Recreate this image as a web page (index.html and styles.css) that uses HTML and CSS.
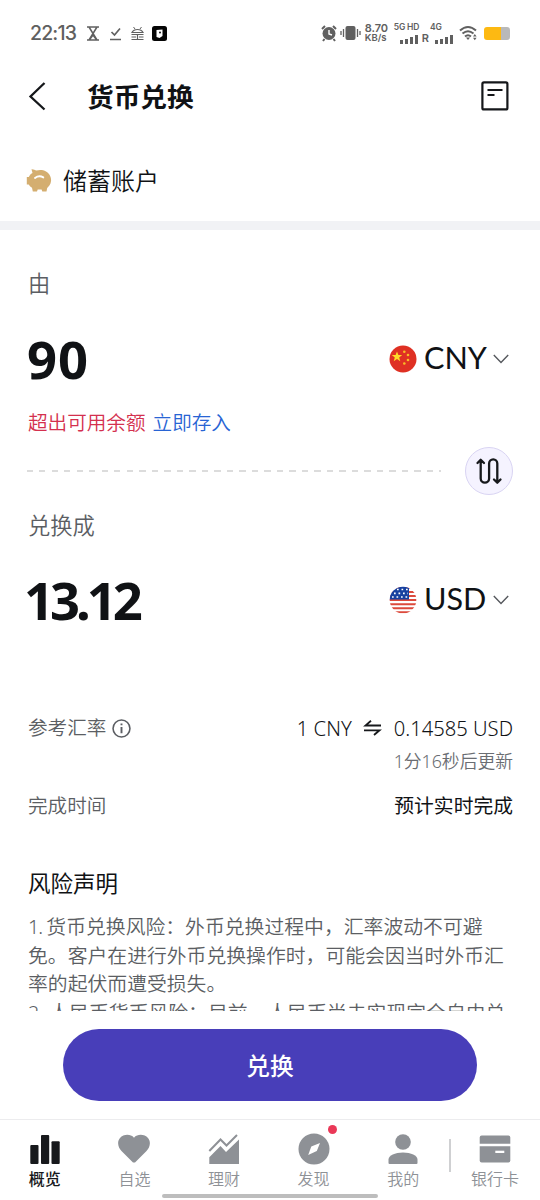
FILE: index.html
```html
<!DOCTYPE html>
<html lang="zh-CN">
<head>
<meta charset="utf-8">
<title>货币兑换</title>
<link rel="stylesheet" href="styles.css">
</head>
<body>
<div class="screen">
  <div class="status">
    <span class="clock">22:13</span>
    <svg class="status-left" width="84" height="20" viewBox="0 0 84 20" fill="none" stroke="#606060" stroke-width="1.5">
      <path d="M2 4H14M2 17H14M4 4L12 17M12 4L4 17M5 16L8 12L11 16"/>
      <path d="M25 16.5H36M26.500 9L29.500 12L35 5.500" stroke-width="1.700"/>
      <path d="M47 9.500A6 5 0 0 1 58 9.500ZM46.500 11.500H58.500M46.500 14H51M54 14H58.500M46.500 16.500H58.500M52.500 12V17" stroke-width="1.200"/>
      <path d="M48.500 4L50 6M56.500 4L55 6" stroke-width="1"/>
      <rect x="67" y="3" width="15" height="15" rx="2.500" fill="#050505" stroke="none"/>
      <path d="M71.500 7L77.500 6.500V13L74.500 15L71.500 14Z" fill="#fff" stroke="none"/>
      <circle cx="75" cy="9.500" r="1" fill="#111" stroke="none"/>
    </svg>
    <div class="status-right">
      <svg class="alarm" width="40" height="18" viewBox="0 0 40 18">
        <circle cx="8" cy="9.500" r="6.500" fill="#606060"/>
        <path d="M1 5L4 2M12 2L15 5M3.500 15L2 17M12.500 15L14 17" stroke="#606060" stroke-width="2"/>
        <path d="M8 6V10L11 11" stroke="#fff" stroke-width="1.400" fill="none"/>
        <rect x="24.500" y="2" width="10" height="14" rx="2" fill="#606060"/>
        <path d="M22.500 5V13M20 7V11M36.500 5V13M39 7V11" stroke="#606060" stroke-width="1.300"/>
      </svg>
      <span class="speed"><b>8.70</b><b>KB/s</b></span>
      <span class="sim"><b>5G HD</b><svg width="18" height="9" viewBox="0 0 18 9" fill="#606060"><path d="M0 5h3v4H0zM5 4h3v5H5zM10 2h3v7h-3zM15 0h3v9h-3z"/></svg></span>
      <span class="roam">R</span>
      <span class="sim sim2"><b>4G</b><svg width="18" height="9" viewBox="0 0 18 9" fill="#606060"><path d="M0 5h3v4H0zM5 4h3v5H5zM10 2h3v7h-3zM15 0h3v9h-3z"/></svg></span>
      <svg class="wifi" width="19" height="16" viewBox="0 0 19 16" fill="none" stroke="#606060" stroke-width="2">
        <path d="M1 5.500Q9 -1.500 17 5.500M3.500 8.500Q9 4 14.500 8.500M6 11.500Q9 9 12 11.500"/>
        <path d="M7 12.500H11L9 15Z" fill="#606060" stroke="none"/>
        <path d="M14 11.500L15.800 9L17.600 11.500ZM14 12.800H17.600L15.800 15.300Z" fill="#606060" stroke="none"/>
      </svg>
      <span class="battery"></span>
    </div>
  </div>

  <header class="header">
    <svg width="20" height="32" viewBox="0 0 20 32" fill="none" stroke="#15171a" stroke-width="2.300"><path d="M17.500 3L3.500 16.500L17.500 29.500"/></svg>
    <h1>货币兑换</h1>
    <svg class="doc" width="28" height="30" viewBox="0 0 28 30" fill="none" stroke="#15171a" stroke-width="2.200"><rect x="1.400" y="1.400" width="25" height="27" rx="1.500"/><path d="M6.500 9H21.500M6.500 14H13.500"/></svg>
  </header>

  <div class="account">
    <svg width="26" height="24" viewBox="0 0 26 24"><path d="M5.500 .2C7.500 0 9 1.300 10.500 1.600C13 .9 17 .8 20 2.400C23.500 4.200 25.300 8 25.100 11.500C24.900 15.500 22.500 17.500 21.200 19L20.500 22.500H16.300L15.600 20.500H11.700L11 22.500H6.800L6 18.700C4.500 17.800 3.300 16.500 2.700 15.400H.8V8H2.800C3.500 6.500 4.500 5 6.500 4Z" fill="#d4ae70"/><path d="M9 9Q13 6 17.300 8.400" fill="none" stroke="#fff" stroke-width="1.900" stroke-linecap="round"/></svg>
    <span>储蓄账户</span>
  </div>

  <main class="content">
    <div class="label from-label">由</div>
    <div class="money">
      <strong>90</strong>
      <span class="currency">
        <svg width="28" height="28" viewBox="0 0 28 28"><circle cx="14" cy="14" r="13.500" fill="#df3023"/><path fill="#ffda28" d="M8 6.500L9.400 10.100H13.200L10.200 12.500L11.300 16.200L8 14L4.700 16.200L5.800 12.500L2.800 10.100H6.600Z"/><g fill="#f8be25"><circle cx="15.300" cy="6.700" r="1.300"/><circle cx="19" cy="10" r="1.300"/><circle cx="19" cy="15" r="1.300"/><circle cx="15.300" cy="18.500" r="1.300"/></g></svg>
        <b>CNY</b>
        <svg class="chevron" width="16" height="10" viewBox="0 0 16 10" fill="none" stroke="#55585d" stroke-width="1.400"><path d="M.8 1L8 8.500L15.200 1"/></svg>
      </span>
    </div>
    <div class="warning"><span>超出可用余额</span><a>立即存入</a></div>
    <div class="swap-row">
      <i class="dashes"></i>
      <span class="swap"><svg width="28" height="28" viewBox="0 0 28 28" fill="none" stroke="#17191c" stroke-width="2.300" stroke-linecap="round" stroke-linejoin="round"><path d="M2.500 6L5.700 2.800L9 6M5.700 3V21.500A4.200 4.200 0 0 0 14.100 21.500V6.500A4.100 4.100 0 0 1 22.300 6.500V25.500M19 22.500L22.300 25.700L25.500 22.500"/></svg></span>
    </div>
    <div class="label to-label">兑换成</div>
    <div class="money to-money">
      <strong>13.12</strong>
      <span class="currency">
        <svg width="28" height="28" viewBox="0 0 28 28"><defs><clipPath id="us"><circle cx="14" cy="14" r="13.300"/></clipPath></defs><g clip-path="url(#us)"><path fill="#fff" d="M0 0H28V28H0Z"/><path stroke="#dc4a3c" stroke-width="2.100" d="M0 2H28M0 6H28M0 10H28M0 14H28M0 18.200H28M0 22.200H28M0 26.300H28"/><path fill="#1741a0" d="M0 0H20V13.500H0Z"/><path stroke="#fff" stroke-width="1.700" stroke-dasharray="1.700 2.800" d="M8 3.500H19M5 7.300H19M3 11H19"/></g></svg>
        <b>USD</b>
        <svg class="chevron" width="16" height="10" viewBox="0 0 16 10" fill="none" stroke="#55585d" stroke-width="1.400"><path d="M.8 1L8 8.500L15.200 1"/></svg>
      </span>
    </div>

    <div class="row rate">
      <span class="key">参考汇率<svg width="19" height="19" viewBox="0 0 18 18" fill="none" stroke="#5b5e63" stroke-width="1.500"><circle cx="9" cy="9" r="8"/><path d="M9 7.500V13.500M9 4.300V6" stroke-width="1.800"/></svg></span>
      <span class="value"><span class="base">1 CNY</span><svg width="19" height="16" viewBox="0 0 19 16" fill="none" stroke="#17191c" stroke-width="1.800"><path d="M8 .8L2.500 5.500H18M1 10.300H16.500L11 15"/></svg><span class="quote">0.14585 USD</span></span>
    </div>
    <div class="update"><span>1分16秒后更新</span></div>
    <div class="row time"><span class="key">完成时间</span><span class="done">预计实时完成</span></div>

    <h2>风险声明</h2>
    <div class="risk">
      <p><span class="number">1. </span>货币兑换风险：外币兑换过程中，汇率波动不可避</p>
      <p>免。客户在进行外币兑换操作时，可能会因当时外币汇</p>
      <p>率的起伏而遭受损失。</p>
      <p>2. 人民币货币风险：目前，人民币尚未实现完全自由兑</p>
    </div>
  </main>

  <button class="submit">兑换</button>

  <nav class="tabs">
    <div class="tab active"><svg width="32" height="32" viewBox="0 0 32 32" fill="currentColor"><rect x="1.300" y="12" width="8.200" height="19" rx="1"/><rect x="12" y="2" width="8.200" height="29" rx="1"/><rect x="22.500" y="8.300" width="8.200" height="22.700" rx="1"/></svg><span>概览</span></div>
    <div class="tab"><svg width="32" height="32" viewBox="0 0 32 32" fill="currentColor"><path d="M16 4.700C12.500 .7 5.500 1 2 5C-1.300 9 .1 14.500 3.500 18L14 28.400Q16 30.800 18 28.400L28.500 18C31.900 14.500 33.300 9 30 5C26.500 1 19.500 .7 16 4.700Z"/></svg><span>自选</span></div>
    <div class="tab"><svg width="32" height="32" viewBox="0 0 32 32" fill="currentColor"><path d="M1.300 24.200L12.500 13L18 19L31 6.500V31H1.300Z"/><path d="M1.300 18L12.500 6.500L18.500 12.500L29 2" fill="none" stroke="currentColor" stroke-width="2"/></svg><span>理财</span></div>
    <div class="tab discover"><svg width="32" height="32" viewBox="0 0 32 32" fill="currentColor"><circle cx="16" cy="16" r="15.500"/><path d="M22 10L18.800 18L10.200 22L13.300 13.600Z" fill="#fff"/></svg><span>发现</span></div>
    <div class="tab"><svg width="32" height="32" viewBox="0 0 32 32" fill="currentColor"><circle cx="16" cy="9" r="7.800"/><path d="M1.500 26.500C1.500 22.500 8 19.600 16 19.600S30.500 22.500 30.500 26.500V30Q30.500 31 29.500 31H2.500Q1.500 31 1.500 30Z"/></svg><span>我的</span></div>
    <i class="separator"></i>
    <div class="tab card"><svg width="32" height="32" viewBox="0 0 32 32" fill="currentColor"><path d="M.7 10.700V4.500Q.7 2.500 2.700 2.500H29.300Q31.300 2.500 31.300 4.500V10.700Z"/><path d="M.7 13.200H31.300V27.500Q31.300 29.500 29.300 29.500H2.700Q.7 29.500 .7 27.500Z"/><path d="M16.300 17.700H25.300V20H16.300Z" fill="#fff"/></svg><span>银行卡</span></div>
  </nav>
  <div class="home"></div>
</div>
</body>
</html>
```

FILE: styles.css
```css
* { box-sizing: border-box; }
body { margin: 0; background: #fff; color: #101215; font-family: "Noto Sans", "Noto Sans CJK SC", sans-serif; font-weight: 350; }
svg { display: block; flex: none; }
h1, h2, p { margin: 0; }
.screen { width: 540px; height: 1200px; overflow: hidden; display: flex; flex-direction: column; background: #fff; }
.screen > * { flex: none; }

.status { height: 66px; padding: 0 30px; display: flex; align-items: center; color: #606060; }
.clock { font: 500 19.500px/24px "Inter", sans-serif; width: 46px; letter-spacing: -.85px; white-space: nowrap; }
.status-left { margin-left: 9px; }
.status-right { margin-left: auto; display: flex; align-items: center; }
.speed { width: 26px; margin-left: 4px; display: flex; flex-direction: column; font: 600 10px/10px "Inter", sans-serif; }
.speed b { height: 10px; font-weight: 600; letter-spacing: 0; font-size: 9.500px; line-height: 10px; }
.speed b:first-child { font-size: 11px; line-height: 9px; height: 9px; letter-spacing: -.1px; }
.sim { width: 24px; height: 21px; margin: 0 3px 0 3px; display: flex; flex-direction: column; align-items: flex-end; justify-content: space-between; font: 600 8.500px/9px "Inter", sans-serif; }
.sim b { align-self: flex-start; font-weight: 600; white-space: nowrap; letter-spacing: -.2px; }
.roam { margin: 9px 0 0 1px; font: 600 11px/12px "Inter", sans-serif; }
.sim2 { width: 23px; margin: 0 0 0 1px; }
.wifi { margin-left: 6px; }
.battery { width: 26px; height: 13px; margin: 0 0 0 6px; border-radius: 3px; background: linear-gradient(90deg, #fdb912 17px, #b9b9b9 17px); }

.header { height: 60px; padding: 0 31px 0 27px; display: flex; align-items: center; }
.header h1 { margin: 2px 0 0 40px; font-size: 26.700px; line-height: 40px; font-weight: 700; }
.doc { margin-left: auto; }
.account { height: 95px; padding: 14px 26px 0; display: flex; align-items: center; }
.account span { margin-left: 11px; font-size: 24px; line-height: 34px; }

.content { height: 790px; padding: 0 27px 0 28px; border-top: 9px solid #f1f2f5; overflow: hidden; }
.label { height: 32px; font-size: 22.300px; line-height: 32px; color: #5b5e63; }
.from-label { margin-top: 38px; }
.money { height: 60px; margin-top: 29px; display: flex; align-items: center; justify-content: space-between; }
.money strong { margin-left: -1px; font-size: 52.500px; line-height: 60px; font-weight: 700; letter-spacing: 1px; }
.currency { display: flex; align-items: center; width: 124px; }
.currency b { width: 64px; margin: -2px 0 0 7px; font: 400 30.600px/40px "Lato", sans-serif; }
.chevron { margin-left: 5px; }
.warning { height: 28px; margin-top: 20px; display: flex; gap: 7px; font-size: 19.600px; line-height: 28px; color: #d4304e; }
.warning a { color: #2864d4; }
.swap-row { height: 48px; margin-top: 10px; display: flex; align-items: center; justify-content: space-between; }
.dashes { width: 414px; height: 2px; margin-left: -1px; background: repeating-linear-gradient(90deg, #dcdcdc 0 6px, transparent 6px 12.500px); }
.swap { width: 48px; height: 48px; border: 1px solid #d9d4f3; border-radius: 50%; background: #f5f3ff; display: grid; place-items: center; }
.to-label { margin-top: 15px; }
.to-money { margin-top: 28px; }
.to-money strong { margin-left: -4px; letter-spacing: -4px; }

.row { height: 30px; display: flex; align-items: center; justify-content: space-between; font-size: 19.600px; line-height: 30px; }
.rate { margin-top: 83px; }
.key { display: flex; align-items: center; color: #5b5e63; }
.key svg { margin-left: 6px; }
.value { display: flex; align-items: center; font-size: 20.200px; }
.value svg { margin: 0 12px 0 11px; }
.update { height: 24px; margin-top: 6px; text-align: right; font-size: 17.800px; line-height: 24px; color: #6a6d72; }
.time { margin-top: 18px; }
.done { font-size: 19.800px; font-weight: 400; }
h2 { margin-top: 46px; height: 34px; font-size: 22.500px; line-height: 34px; font-weight: 400; }
.risk { height: 98px; margin-top: 12px; overflow: hidden; color: #5b5e63; font-size: 19.830px; }
.risk p { height: 28.600px; line-height: 28.600px; white-space: nowrap; }
.number { letter-spacing: -1px; }

.submit { width: 414px; height: 72px; margin: 18px auto 0; padding: 0; border: 0; border-radius: 36px; background: #483eb9; color: #fff; font: 500 23.700px/34px "Noto Sans CJK SC", sans-serif; }
.tabs { height: 75px; margin-top: 18px; border-top: 1px solid #ececee; display: grid; grid-template-columns: repeat(5, 89.600px) 2px 1fr; color: #8e9196; }
.tab { display: flex; flex-direction: column; align-items: center; padding-top: 13px; font-size: 16px; line-height: 24px; }
.tab span { margin-top: 2px; }
.active { color: #17191c; font-weight: 500; }
.discover { position: relative; }
.discover::after { content: ""; position: absolute; width: 9px; height: 9px; left: 59px; top: 5px; border-radius: 50%; background: #ea3857; }
.separator { width: 2px; height: 33px; margin: 19px 0 0 1px; background: #cfd0d2; }
.home { width: 216px; height: 4px; margin-left: 162px; border-radius: 2px; background: #bdbdbd; }
```
